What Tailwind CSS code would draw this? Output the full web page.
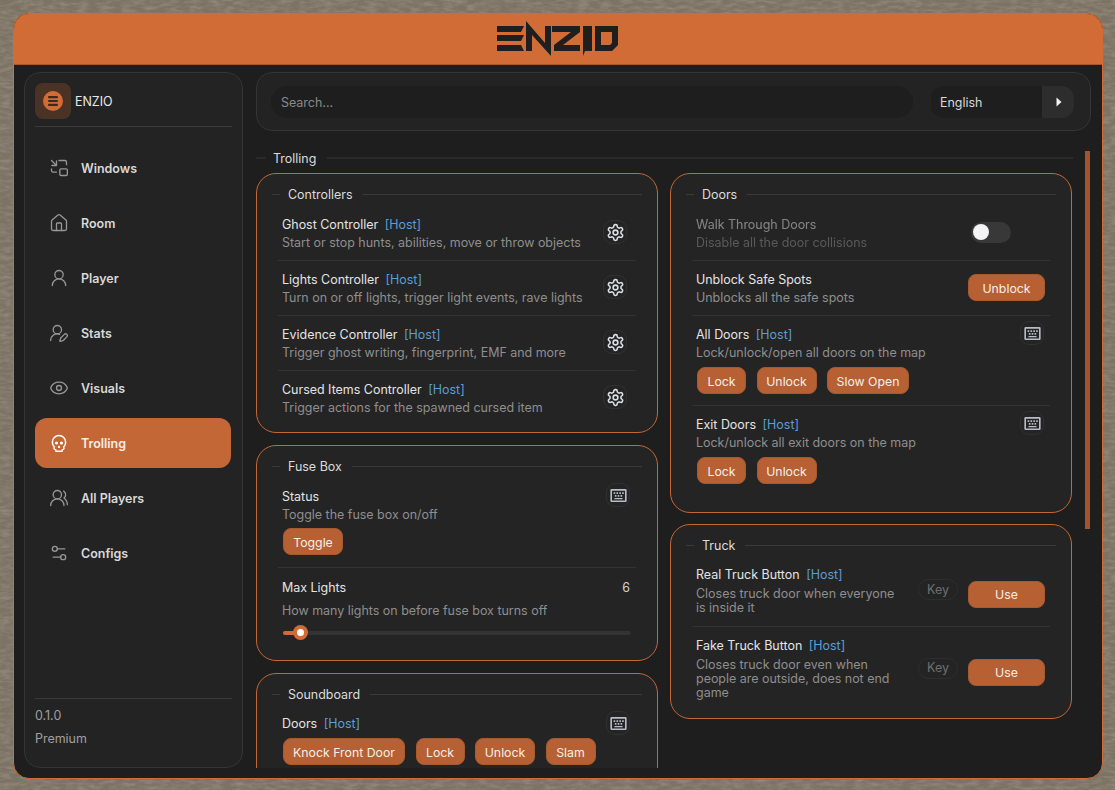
<!DOCTYPE html>
<html lang="en">
<head>
  <meta charset="UTF-8" />
  <title>ENZIO</title>
  <script src="https://cdn.jsdelivr.net/npm/@tailwindcss/browser@4"></script>
</head>
<body class="relative h-[790px] w-[1115px] overflow-hidden bg-[#7d7364] font-['Inter',sans-serif] text-[12.46px] text-[#e4e4e4]">

  <!-- stone-ish wallpaper behind the window -->
  <svg width="1115" height="790" class="absolute left-0 top-0">
    <filter id="stone">
      <feTurbulence type="fractalNoise" baseFrequency="0.09 0.3" numOctaves="3" seed="4" />
      <feColorMatrix values="0 0 0 0 0.36  0 0 0 0 0.32  0 0 0 0 0.27  0 0 0 1.1 -0.4" />
    </filter>
    <rect width="1115" height="790" filter="url(#stone)" />
  </svg>

  <svg width="0" height="0" class="absolute">
    <defs>
      <symbol id="gear" viewBox="0 0 24 24" fill="none" stroke="currentColor" stroke-width="2" stroke-linecap="round" stroke-linejoin="round">
        <path d="M12.22 2h-.44a2 2 0 0 0-2 2v.18a2 2 0 0 1-1 1.73l-.43.25a2 2 0 0 1-2 0l-.15-.08a2 2 0 0 0-2.73.73l-.22.38a2 2 0 0 0 .73 2.73l.15.1a2 2 0 0 1 1 1.72v.51a2 2 0 0 1-1 1.74l-.15.09a2 2 0 0 0-.73 2.73l.22.38a2 2 0 0 0 2.73.73l.15-.08a2 2 0 0 1 2 0l.43.25a2 2 0 0 1 1 1.73V20a2 2 0 0 0 2 2h.44a2 2 0 0 0 2-2v-.18a2 2 0 0 1 1-1.73l.43-.25a2 2 0 0 1 2 0l.15.08a2 2 0 0 0 2.73-.73l.22-.39a2 2 0 0 0-.73-2.73l-.15-.08a2 2 0 0 1-1-1.74v-.5a2 2 0 0 1 1-1.74l.15-.09a2 2 0 0 0 .73-2.73l-.22-.38a2 2 0 0 0-2.73-.73l-.15.08a2 2 0 0 1-2 0l-.43-.25a2 2 0 0 1-1-1.73V4a2 2 0 0 0-2-2z" />
        <circle cx="12" cy="12" r="3" />
      </symbol>
      <symbol id="kbd" viewBox="0 0 20 16" fill="currentColor">
        <path fill-rule="evenodd" d="M1.5 0h17A1.5 1.5 0 0 1 20 1.5v13a1.5 1.5 0 0 1-1.5 1.5h-17A1.5 1.5 0 0 1 0 14.5v-13A1.5 1.5 0 0 1 1.5 0zM2 2v12h16V2z" />
        <path d="M4 4h2v2H4zM7.5 4h2v2h-2zM11 4h2v2h-2zM14.5 4h2v2h-2zM5.5 7.5h2v2h-2zM9 7.5h2v2H9zM12.5 7.5h2v2h-2zM5 11h10v1.5H5z" />
      </symbol>
    </defs>
  </svg>

  <div class="relative m-[13px] flex h-[766px] w-[1090px] flex-col overflow-hidden rounded-2xl border border-[#d26b35] bg-[#1e1e1e]">
    <header class="flex h-[51px] shrink-0 items-center justify-center border-b border-[#a9552a] bg-[#d26c36]">
      <svg width="122" height="35" viewBox="0 0 122 35" fill="#1f1f1f" class="-mt-[2px]">
        <path d="M0 5h27l-3 6H0zM0 14h27l-3 6H0zM0 24h24l3 6H0z" />
        <path d="M29 0L48 22V5h6v30L35 14v16h-6z" />
        <path d="M55 5h28v6L66 24h17v6H57v-6l17-13H55z" />
        <path d="M86 35V5h9v25h-7z" />
        <path fill-rule="evenodd" d="M98 5h23v19l-6 6H98zM104 11v13h9l2-2V11z" />
      </svg>
    </header>

    <div class="flex min-h-0 flex-1 gap-[13px] pl-[10px] pr-[11px] pt-[7px] pb-[10px]">
      <!-- sidebar -->
      <aside class="flex w-[219px] shrink-0 flex-col rounded-2xl border border-[#353535] bg-[#232323] px-[10px] pt-[10px] pb-5">
        <div class="flex items-center gap-1 border-b border-[#3a3a3a] pb-[7px]">
          <div class="flex h-9 w-9 items-center justify-center rounded-lg bg-[#4a3225]">
            <div class="flex h-5 w-5 items-center justify-center rounded-full bg-[#d26c36]">
              <svg width="12" height="12" viewBox="0 0 12 12" fill="#3a2a20"><rect x="1" y="1" width="10" height="2.2" rx="1"/><rect x="1" y="4.9" width="10" height="2.2" rx="1"/><rect x="1" y="8.8" width="10" height="2.2" rx="1"/></svg>
            </div>
          </div>
          <span class="pt-[3px] text-[#e8e8e8]">ENZIO</span>
        </div>

        <nav class="mt-4 flex flex-col gap-[5px] pr-px font-semibold text-[#d8d8d8]">
          <a class="flex h-[50px] items-center gap-3 rounded-xl pl-[14px]">
            <svg class="h-5 w-5 text-[#969696]" viewBox="0 0 24 24" fill="none" stroke="currentColor" stroke-width="1.6" stroke-linecap="round" stroke-linejoin="round"><path d="M3 3l6 6M3.5 9H9V3.5" /><path d="M12 3h7a2 2 0 0 1 2 2v3M3 13v2a2 2 0 0 0 2 2h4" /><rect x="13" y="13" width="9" height="8" rx="1.5" /></svg>
            <span class="pt-[3px]">Windows</span>
          </a>
          <a class="flex h-[50px] items-center gap-3 rounded-xl pl-[14px]">
            <svg class="h-5 w-5 text-[#969696]" viewBox="0 0 24 24" fill="none" stroke="currentColor" stroke-width="1.6" stroke-linecap="round" stroke-linejoin="round"><path d="M15 21v-8a1 1 0 0 0-1-1h-4a1 1 0 0 0-1 1v8" /><path d="M3 10a2 2 0 0 1 .709-1.528l7-5.999a2 2 0 0 1 2.582 0l7 5.999A2 2 0 0 1 21 10v9a2 2 0 0 1-2 2H5a2 2 0 0 1-2-2z" /></svg>
            <span class="pt-[3px]">Room</span>
          </a>
          <a class="flex h-[50px] items-center gap-3 rounded-xl pl-[14px]">
            <svg class="h-5 w-5 text-[#969696]" viewBox="0 0 24 24" fill="none" stroke="currentColor" stroke-width="1.6" stroke-linecap="round" stroke-linejoin="round"><circle cx="12" cy="8" r="5" /><path d="M20 21a8 8 0 0 0-16 0" /></svg>
            <span class="pt-[3px]">Player</span>
          </a>
          <a class="flex h-[50px] items-center gap-3 rounded-xl pl-[14px]">
            <svg class="h-5 w-5 text-[#969696]" viewBox="0 0 24 24" fill="none" stroke="currentColor" stroke-width="1.6" stroke-linecap="round" stroke-linejoin="round"><path d="M2 21a8 8 0 0 1 10.821-7.487" /><path d="M21.378 16.626a1 1 0 0 0-3.004-3.004l-4.01 4.012a2 2 0 0 0-.506.854l-.837 2.87a.5.5 0 0 0 .62.62l2.87-.837a2 2 0 0 0 .854-.506z" /><circle cx="10" cy="8" r="5" /></svg>
            <span class="pt-[3px]">Stats</span>
          </a>
          <a class="flex h-[50px] items-center gap-3 rounded-xl pl-[14px]">
            <svg class="h-5 w-5 text-[#969696]" viewBox="0 0 24 24" fill="none" stroke="currentColor" stroke-width="1.6" stroke-linecap="round" stroke-linejoin="round"><path d="M2.062 12.348a1 1 0 0 1 0-.696 10.75 10.75 0 0 1 19.876 0 1 1 0 0 1 0 .696 10.75 10.75 0 0 1-19.876 0" /><circle cx="12" cy="12" r="3" /></svg>
            <span class="pt-[3px]">Visuals</span>
          </a>
          <a class="flex h-[50px] items-center gap-3 rounded-xl bg-[#c46736] pl-[14px] text-[#f7ece6]">
            <svg class="h-5 w-5 text-white" viewBox="0 0 24 24" fill="none" stroke="currentColor" stroke-width="1.8" stroke-linecap="round" stroke-linejoin="round"><path d="m12.5 17-.5-1-.5 1h1" /><path d="M15 22a1 1 0 0 0 1-1v-1a2 2 0 0 0 1.56-3.25 8 8 0 1 0-11.12 0A2 2 0 0 0 8 20v1a1 1 0 0 0 1 1z" /><circle cx="15" cy="12" r="1" /><circle cx="9" cy="12" r="1" /></svg>
            <span class="pt-[3px]">Trolling</span>
          </a>
          <a class="flex h-[50px] items-center gap-3 rounded-xl pl-[14px]">
            <svg class="h-5 w-5 text-[#969696]" viewBox="0 0 24 24" fill="none" stroke="currentColor" stroke-width="1.6" stroke-linecap="round" stroke-linejoin="round"><path d="M18 21a8 8 0 0 0-16 0" /><circle cx="10" cy="8" r="5" /><path d="M22 20c0-3.37-2-6.5-4-8a5 5 0 0 0-.45-8.3" /></svg>
            <span class="pt-[3px]">All Players</span>
          </a>
          <a class="flex h-[50px] items-center gap-3 rounded-xl pl-[14px]">
            <svg class="h-5 w-5 text-[#969696]" viewBox="0 0 24 24" fill="none" stroke="currentColor" stroke-width="1.6" stroke-linecap="round" stroke-linejoin="round"><path d="M14 17H5" /><path d="M19 7h-9" /><circle cx="17" cy="17" r="3" /><circle cx="7" cy="7" r="3" /></svg>
            <span class="pt-[3px]">Configs</span>
          </a>
        </nav>

        <div class="mt-auto border-t border-[#3a3a3a] pt-[9px] text-[#a0a0a0]">
          <div class="leading-[16px]">0.1.0</div>
          <div class="mt-[7px] leading-[16px]">Premium</div>
        </div>
      </aside>

      <!-- main -->
      <main class="flex min-w-0 flex-1 flex-col">
        <div class="flex h-[59px] shrink-0 items-center rounded-2xl border border-[#353535] bg-[#232323] pl-[14px] pr-4">
          <div class="flex h-8 w-[642px] items-center rounded-2xl bg-[#1e1e1e] px-[10px] pt-[3px] text-[#8a8a8a]">Search...</div>
          <div class="ml-[18px] flex h-8 w-[143px] items-center overflow-hidden rounded-xl bg-[#1e1e1e]">
            <span class="flex-1 pl-[9px] pt-1 text-[#d8d8d8]">English</span>
            <span class="flex h-8 w-8 items-center justify-center bg-[#2d2d2d]">
              <svg width="8" height="10" viewBox="0 0 8 10" fill="#f2f2f2" class="ml-px"><path d="M1.5 .5v9L6.5 5z" /></svg>
            </span>
          </div>
        </div>

        <div class="relative mt-5 min-h-0 flex-1 overflow-hidden">
          <div class="absolute right-px top-0 h-[378px] w-[5px] bg-[#a0552c]"></div>

          <div class="flex h-4 w-[817px] items-center leading-4 text-[#dcdcdc]">
            <span class="mb-[2px] h-0.5 w-[10px] bg-[#2a2a2a]"></span>
            <span class="ml-[7px] mr-[11px]">Trolling</span>
            <span class="mb-[2px] h-0.5 flex-1 bg-[#2a2a2a]"></span>
          </div>

          <div class="mt-[6px] flex items-start gap-3">
            <div class="flex w-[402px] flex-col gap-3">
              <!-- controllers -->
              <section class="h-[260px] rounded-[20px] border border-[#c46736] bg-[#242424] px-[15px] pt-[13px]">
                <div class="flex h-4 items-center text-[#dcdcdc]">
                  <span class="mb-[2px] h-px w-2 bg-[#3a3a3a]"></span>
                  <span class="ml-2 mr-[10px]">Controllers</span>
                  <span class="mb-[2px] h-px flex-1 bg-[#3a3a3a]"></span>
                </div>
                <div class="mt-[3px]">
                  <div class="mx-[6px] flex h-[55px] items-center justify-between border-b border-[#333] px-1">
                    <div class="pt-[2px]">
                      <div class="leading-[18px]">Ghost Controller <span class="ml-[3px] text-[#5a9fd6]">[Host]</span></div>
                      <div class="leading-[18px] text-[#8f8f8f]">Start or stop hunts, abilities, move or throw objects</div>
                    </div>
                    <span class="mb-[2px] mr-[5px] flex h-6 w-6 items-center justify-center rounded-[9px] border border-[#313131] text-[#dcdfe6]"><svg class="h-[19px] w-[19px]"><use href="#gear" /></svg></span>
                  </div>
                  <div class="mx-[6px] flex h-[55px] items-center justify-between border-b border-[#333] px-1">
                    <div class="pt-[2px]">
                      <div class="leading-[18px]">Lights Controller <span class="ml-[3px] text-[#5a9fd6]">[Host]</span></div>
                      <div class="leading-[18px] text-[#8f8f8f]">Turn on or off lights, trigger light events, rave lights</div>
                    </div>
                    <span class="mb-[2px] mr-[5px] flex h-6 w-6 items-center justify-center rounded-[9px] border border-[#313131] text-[#dcdfe6]"><svg class="h-[19px] w-[19px]"><use href="#gear" /></svg></span>
                  </div>
                  <div class="mx-[6px] flex h-[55px] items-center justify-between border-b border-[#333] px-1">
                    <div class="pt-[2px]">
                      <div class="leading-[18px]">Evidence Controller <span class="ml-[3px] text-[#5a9fd6]">[Host]</span></div>
                      <div class="leading-[18px] text-[#8f8f8f]">Trigger ghost writing, fingerprint, EMF and more</div>
                    </div>
                    <span class="mb-[2px] mr-[5px] flex h-6 w-6 items-center justify-center rounded-[9px] border border-[#313131] text-[#dcdfe6]"><svg class="h-[19px] w-[19px]"><use href="#gear" /></svg></span>
                  </div>
                  <div class="mx-[6px] flex h-[55px] items-center justify-between border-b border-transparent px-1">
                    <div class="pt-[2px]">
                      <div class="leading-[18px]">Cursed Items Controller <span class="ml-[3px] text-[#5a9fd6]">[Host]</span></div>
                      <div class="leading-[18px] text-[#8f8f8f]">Trigger actions for the spawned cursed item</div>
                    </div>
                    <span class="mb-[2px] mr-[5px] flex h-6 w-6 items-center justify-center rounded-[9px] border border-[#313131] text-[#dcdfe6]"><svg class="h-[19px] w-[19px]"><use href="#gear" /></svg></span>
                  </div>
                </div>
              </section>

              <!-- fuse box -->
              <section class="h-[216px] rounded-[20px] border border-[#c46736] bg-[#242424] px-[15px] pt-[13px]">
                <div class="flex h-4 items-center text-[#dcdcdc]">
                  <span class="mb-[2px] h-px w-2 bg-[#3a3a3a]"></span>
                  <span class="ml-2 mr-[10px]">Fuse Box</span>
                  <span class="mb-[2px] h-px flex-1 bg-[#3a3a3a]"></span>
                </div>
                <div class="mx-[6px] mt-[13px] border-b border-[#333] px-1 pb-3">
                  <div class="flex items-start justify-between">
                    <div>
                      <div class="leading-[18px]">Status</div>
                      <div class="leading-[18px] text-[#8f8f8f]">Toggle the fuse box on/off</div>
                    </div>
                    <span class="-mt-[5px] mr-[2px] flex h-6 w-6 items-center justify-center rounded-[9px] border border-[#313131] text-[#b8bcc6]"><svg class="h-[13px] w-[17px]"><use href="#kbd" /></svg></span>
                  </div>
                  <button class="ml-px mt-1 h-[27px] w-[60px] rounded-lg border border-[#a55a30] bg-[#b76033] pt-[3px] text-[12.3px] text-[#f5efe9]">Toggle</button>
                </div>
                <div class="mx-[6px] px-1 pt-[11px]">
                  <div class="flex justify-between pr-[2px] leading-[18px]"><span>Max Lights</span><span class="text-[#d0d0d0]">6</span></div>
                  <div class="mt-[5px] leading-[18px] text-[#8f8f8f]">How many lights on before fuse box turns off</div>
                  <div class="relative ml-px mr-px mt-[5px] h-4">
                    <div class="absolute inset-x-0 top-[6px] h-1 rounded-full bg-[#333]"></div>
                    <div class="absolute left-0 top-[6px] h-1 w-[14px] rounded-l-full bg-[#d26c36]"></div>
                    <div class="absolute left-[10px] top-0 flex h-[15px] w-[15px] items-center justify-center rounded-full bg-[#d26c36]"><span class="h-[7px] w-[7px] rounded-full bg-white"></span></div>
                  </div>
                </div>
              </section>

              <!-- soundboard -->
              <section class="h-[120px] rounded-[20px] border border-[#c46736] bg-[#242424] px-[15px] pt-[13px]">
                <div class="flex h-4 items-center text-[#dcdcdc]">
                  <span class="mb-[2px] h-px w-2 bg-[#3a3a3a]"></span>
                  <span class="ml-2 mr-[10px]">Soundboard</span>
                  <span class="mb-[2px] h-px flex-1 bg-[#3a3a3a]"></span>
                </div>
                <div class="mx-[6px] mt-3 px-1">
                  <div class="flex h-[18px] items-start justify-between">
                    <div class="leading-[18px]">Doors <span class="ml-[3px] text-[#5a9fd6]">[Host]</span></div>
                    <span class="-mt-[4px] mr-[2px] flex h-6 w-6 items-center justify-center rounded-[9px] border border-[#313131] text-[#b8bcc6]"><svg class="h-[13px] w-[17px]"><use href="#kbd" /></svg></span>
                  </div>
                  <div class="ml-px mt-[5px] flex gap-[10.5px]">
                    <button class="h-[27px] w-[122px] rounded-lg border border-[#a55a30] bg-[#b76033] pt-[3px] text-[12.3px] text-[#f5efe9]">Knock Front Door</button>
                    <button class="h-[27px] w-[49px] rounded-lg border border-[#a55a30] bg-[#b76033] pt-[3px] text-[12.3px] text-[#f5efe9]">Lock</button>
                    <button class="h-[27px] w-[60px] rounded-lg border border-[#a55a30] bg-[#b76033] pt-[3px] text-[12.3px] text-[#f5efe9]">Unlock</button>
                    <button class="h-[27px] w-[50px] rounded-lg border border-[#a55a30] bg-[#b76033] pt-[3px] text-[12.3px] text-[#f5efe9]">Slam</button>
                  </div>
                </div>
              </section>
            </div>

            <div class="flex w-[402px] flex-col gap-[11px]">
              <!-- doors -->
              <section class="h-[340px] rounded-[20px] border border-[#c46736] bg-[#242424] px-[15px] pt-[13px]">
                <div class="flex h-4 items-center text-[#dcdcdc]">
                  <span class="mb-[2px] h-px w-2 bg-[#3a3a3a]"></span>
                  <span class="ml-2 mr-[10px]">Doors</span>
                  <span class="mb-[2px] h-px flex-1 bg-[#3a3a3a]"></span>
                </div>
                <div class="mt-[3px]">
                  <div class="mx-[6px] flex h-[55px] items-center justify-between border-b border-[#333] px-1">
                    <div class="pt-[2px] opacity-50">
                      <div class="leading-[18px]">Walk Through Doors</div>
                      <div class="leading-[18px] text-[#8f8f8f]">Disable all the door collisions</div>
                    </div>
                    <span class="mb-[2px] mr-[35px] flex h-[21px] w-10 items-center rounded-full bg-[#383838] px-[2px]"><span class="h-4 w-4 rounded-full bg-[#f4f4f6]"></span></span>
                  </div>
                  <div class="mx-[6px] flex h-[55px] items-center justify-between border-b border-[#333] px-1">
                    <div class="pt-[2px]">
                      <div class="leading-[18px]">Unblock Safe Spots</div>
                      <div class="leading-[18px] text-[#8f8f8f]">Unblocks all the safe spots</div>
                    </div>
                    <button class="mb-px mr-px h-[27px] w-[77px] rounded-lg border border-[#a55a30] bg-[#b76033] pt-[3px] text-[12.3px] text-[#f5efe9]">Unblock</button>
                  </div>
                  <div class="mx-[6px] h-[90px] border-b border-[#333] px-1 pt-[10px]">
                    <div class="flex items-start justify-between">
                      <div>
                        <div class="leading-[18px]">All Doors <span class="ml-[3px] text-[#5a9fd6]">[Host]</span></div>
                        <div class="leading-[18px] text-[#8f8f8f]">Lock/unlock/open all doors on the map</div>
                      </div>
                      <span class="-mt-[5px] mr-[2px] flex h-6 w-6 items-center justify-center rounded-[9px] border border-[#313131] text-[#b8bcc6]"><svg class="h-[13px] w-[17px]"><use href="#kbd" /></svg></span>
                    </div>
                    <div class="ml-px mt-[5px] flex gap-[10.5px]">
                      <button class="h-[27px] w-[49px] rounded-lg border border-[#a55a30] bg-[#b76033] pt-[3px] text-[12.3px] text-[#f5efe9]">Lock</button>
                      <button class="h-[27px] w-[60px] rounded-lg border border-[#a55a30] bg-[#b76033] pt-[3px] text-[12.3px] text-[#f5efe9]">Unlock</button>
                      <button class="h-[27px] w-[82px] rounded-lg border border-[#a55a30] bg-[#b76033] pt-[3px] text-[12.3px] text-[#f5efe9]">Slow Open</button>
                    </div>
                  </div>
                  <div class="mx-[6px] px-1 pt-[10px]">
                    <div class="flex items-start justify-between">
                      <div>
                        <div class="leading-[18px]">Exit Doors <span class="ml-[3px] text-[#5a9fd6]">[Host]</span></div>
                        <div class="leading-[18px] text-[#8f8f8f]">Lock/unlock all exit doors on the map</div>
                      </div>
                      <span class="-mt-[5px] mr-[2px] flex h-6 w-6 items-center justify-center rounded-[9px] border border-[#313131] text-[#b8bcc6]"><svg class="h-[13px] w-[17px]"><use href="#kbd" /></svg></span>
                    </div>
                    <div class="ml-px mt-[5px] flex gap-[10.5px]">
                      <button class="h-[27px] w-[49px] rounded-lg border border-[#a55a30] bg-[#b76033] pt-[3px] text-[12.3px] text-[#f5efe9]">Lock</button>
                      <button class="h-[27px] w-[60px] rounded-lg border border-[#a55a30] bg-[#b76033] pt-[3px] text-[12.3px] text-[#f5efe9]">Unlock</button>
                    </div>
                  </div>
                </div>
              </section>

              <!-- truck -->
              <section class="h-[195px] rounded-[20px] border border-[#c46736] bg-[#242424] px-[15px] pt-[13px]">
                <div class="flex h-4 items-center text-[#dcdcdc]">
                  <span class="mb-[2px] h-px w-2 bg-[#3a3a3a]"></span>
                  <span class="ml-2 mr-[10px]">Truck</span>
                  <span class="mb-[2px] h-px flex-1 bg-[#3a3a3a]"></span>
                </div>
                <div class="mt-[3px]">
                  <div class="mx-[6px] flex h-[70px] items-center border-b border-[#333] px-1 pb-[2px]">
                    <div class="w-[205px]">
                      <div class="leading-[18px]">Real Truck Button <span class="ml-[3px] text-[#5a9fd6]">[Host]</span></div>
                      <div class="mt-[3px] leading-[14px] text-[#8f8f8f]">Closes truck door when everyone is inside it</div>
                    </div>
                    <span class="ml-[17px] mb-[2px] flex h-[21px] w-10 items-center justify-center rounded-full border border-[#2e2e2e] pt-px text-[#6f6f6f]">Key</span>
                    <button class="ml-[10px] mt-[7px] h-[27px] w-[77px] rounded-lg border border-[#a55a30] bg-[#b76033] pt-[3px] text-[12.3px] text-[#f5efe9]">Use</button>
                  </div>
                  <div class="mx-[6px] flex h-[78px] items-center px-1 pt-1">
                    <div class="w-[205px]">
                      <div class="leading-[18px]">Fake Truck Button <span class="ml-[3px] text-[#5a9fd6]">[Host]</span></div>
                      <div class="mt-[3px] leading-[14px] text-[#8f8f8f]">Closes truck door even when people are outside, does not end game</div>
                    </div>
                    <span class="ml-[17px] flex h-[21px] w-10 items-center justify-center rounded-full border border-[#2e2e2e] pt-px text-[#6f6f6f]">Key</span>
                    <button class="ml-[10px] mt-2 h-[27px] w-[77px] rounded-lg border border-[#a55a30] bg-[#b76033] pt-[3px] text-[12.3px] text-[#f5efe9]">Use</button>
                  </div>
                </div>
              </section>
            </div>
          </div>
        </div>
      </main>
    </div>
  </div>
</body>
</html>
